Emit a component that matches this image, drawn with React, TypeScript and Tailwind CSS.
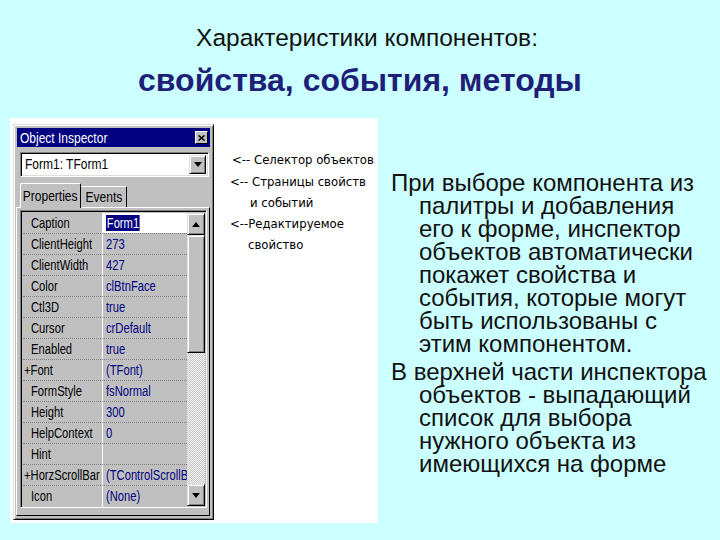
import React from "react";

const rows: { n: string; v: string; plus?: boolean; sel?: boolean }[] = [
  { n: "Caption", v: "Form1", sel: true },
  { n: "ClientHeight", v: "273" },
  { n: "ClientWidth", v: "427" },
  { n: "Color", v: "clBtnFace" },
  { n: "Ctl3D", v: "true" },
  { n: "Cursor", v: "crDefault" },
  { n: "Enabled", v: "true" },
  { n: "Font", v: "(TFont)", plus: true },
  { n: "FormStyle", v: "fsNormal" },
  { n: "Height", v: "300" },
  { n: "HelpContext", v: "0" },
  { n: "Hint", v: "" },
  { n: "HorzScrollBar", v: "(TControlScrollBar)", plus: true },
  { n: "Icon", v: "(None)" },
];

const p1 = [
  "При выборе компонента из",
  "палитры и добавления",
  "его к форме, инспектор",
  "объектов автоматически",
  "покажет свойства и",
  "события, которые могут",
  "быть использованы с",
  "этим компонентом.",
];
const p2 = [
  "В верхней части инспектора",
  "объектов -  выпадающий",
  "список для выбора",
  "нужного объекта из",
  "имеющихся на форме",
];

function N({ children }: { children: React.ReactNode }) {
  return <span className="inline-block origin-left scale-x-[0.8] whitespace-nowrap">{children}</span>;
}
function NC({ children }: { children: React.ReactNode }) {
  return <span className="inline-block origin-center scale-x-[0.8] whitespace-nowrap">{children}</span>;
}

function Tri({ up }: { up?: boolean }) {
  return (
    <svg width="8" height="5" viewBox="0 0 8 5">
      {up ? <path d="M0 5 L4 0 L8 5 Z" fill="#000" /> : <path d="M0 0 L8 0 L4 5 Z" fill="#000" />}
    </svg>
  );
}

export default function App() {
  return (
    <div className="w-[720px] h-[540px] overflow-hidden bg-[#ccffff] font-['Liberation_Sans',Arial,sans-serif]">
      <div className="pt-[26px] pl-[14px] text-center text-[24.5px] leading-[24px] text-[#111111]">Характеристики компонентов:</div>
      <div className="mt-[12px] text-center text-[32px] leading-[36px] font-bold text-[#1f1f7a]">свойства, события, методы</div>

      <div className="mt-[20px] flex items-start">
        {/* screenshot block */}
        <div className="ml-[10px] w-[368px] h-[405px] bg-white flex items-start pt-[6px] pl-[3px]">
          {/* Object inspector window */}
          <div className="w-[201px] h-[396px] bg-[#c0c0c0] border-[1px] border-t-[#dfdfdf] border-l-[#dfdfdf] border-r-[#000000] border-b-[#000000] shadow-[inset_1px_1px_0_#ffffff,inset_-1px_-1px_0_#808080] p-[3px] flex flex-col text-[14px]">
            {/* title bar */}
            <div className="h-[19px] bg-[#000080] flex items-center justify-between pl-[3px] pr-[2px] overflow-hidden">
              <span className="text-white leading-[19px] text-[15px]"><N>Object Inspector</N></span>
              <div className="w-[13px] h-[13px] shrink-0 bg-[#c0c0c0] border-[1px] border-t-white border-l-white border-r-[#000000] border-b-[#000000] flex items-center justify-center">
                <svg width="7" height="6" viewBox="0 0 7 6">
                  <path d="M0.5 0.5 L6.5 5.5 M6.5 0.5 L0.5 5.5" stroke="#000" strokeWidth="1.6" />
                </svg>
              </div>
            </div>
            {/* combo */}
            <div className="mt-[5px] ml-[3px] w-[189px] h-[25px] bg-white border-[1px] border-t-[#808080] border-l-[#808080] border-r-white border-b-white shadow-[inset_1px_1px_0_#000000,inset_-1px_-1px_0_#dfdfdf] flex items-stretch p-[2px]">
              <div className="flex-1 pl-[2px] flex items-center text-black overflow-hidden text-[15px]"><N>Form1: TForm1</N></div>
              <div className="w-[17px] shrink-0 bg-[#c0c0c0] border-[1px] border-t-[#dfdfdf] border-l-[#dfdfdf] border-r-[#000000] border-b-[#000000] shadow-[inset_1px_1px_0_#ffffff,inset_-1px_-1px_0_#808080] flex items-center justify-center">
                <Tri />
              </div>
            </div>
            {/* tabs */}
            <div className="mt-[6px] ml-[3px] flex items-end h-[24px] relative z-10">
              <div className="w-[61px] h-[25px] mb-[-1px] bg-[#c0c0c0] border-t-[1px] border-l-[1px] border-r-[1px] border-t-white border-l-white border-r-[#000000] rounded-t-[2px] flex items-center justify-center text-black text-[15px]"><NC>Properties</NC></div>
              <div className="w-[46px] h-[21px] bg-[#c0c0c0] border-t-[1px] border-r-[1px] border-t-white border-r-[#000000] rounded-tr-[2px] flex items-center justify-center text-black text-[15px]"><NC>Events</NC></div>
            </div>
            {/* tab page */}
            <div className="flex-1 -ml-[1px] w-[194px] border-[1px] border-t-white border-l-white border-r-[#000000] border-b-[#000000] pt-[2px] pl-[3px]">
              {/* grid */}
              <div className="w-[187px] h-[298px] border-[1px] border-t-[#808080] border-l-[#808080] border-r-white border-b-white shadow-[inset_1px_1px_0_#000000] p-[1px] pl-[2px] pt-[2px] flex">
                <div className="w-[164px] flex flex-col">
                  {rows.map((r, i) => (
                    <div
                      key={i}
                      className={i < 13 ? "flex h-[21px] shrink-0 border-b-[1px] border-dotted border-[#808080]" : "flex h-[21px] shrink-0"}
                    >
                      <div className={r.plus ? "w-[80px] shrink-0 pl-[1px] border-r-[1px] border-white flex items-center text-black overflow-hidden" : "w-[80px] shrink-0 pl-[8px] border-r-[1px] border-white flex items-center text-black overflow-hidden"}>
                        <N>
                          {r.plus ? "+" : ""}
                          {r.n}
                        </N>
                      </div>
                      <div className={r.sel ? "flex-1 bg-white pl-[3px] flex items-center overflow-hidden" : "flex-1 pl-[3px] flex items-center text-[#000080] overflow-hidden"}>
                        {r.sel ? (
                          <N>
                            <span className="bg-[#000080] text-white px-[1px] leading-[16px] inline-block">{r.v}</span>
                          </N>
                        ) : (
                          <N>{r.v}</N>
                        )}
                      </div>
                    </div>
                  ))}
                </div>
                {/* scrollbar */}
                <div className="w-[18px] flex flex-col bg-[repeating-conic-gradient(#c0c0c0_0%_25%,#ffffff_0%_50%)] bg-[length:2px_2px]">
                  <div className="h-[22px] bg-[#c0c0c0] border-[1px] border-t-[#dfdfdf] border-l-[#dfdfdf] border-r-[#000000] border-b-[#000000] shadow-[inset_1px_1px_0_#ffffff,inset_-1px_-1px_0_#808080] flex items-center justify-center">
                    <Tri up />
                  </div>
                  <div className="h-[118px] bg-[#c0c0c0] border-[1px] border-t-[#dfdfdf] border-l-[#dfdfdf] border-r-[#000000] border-b-[#000000] shadow-[inset_1px_1px_0_#ffffff,inset_-1px_-1px_0_#808080]" />
                  <div className="flex-1" />
                  <div className="h-[22px] bg-[#c0c0c0] border-[1px] border-t-[#dfdfdf] border-l-[#dfdfdf] border-r-[#000000] border-b-[#000000] shadow-[inset_1px_1px_0_#ffffff,inset_-1px_-1px_0_#808080] flex items-center justify-center">
                    <Tri />
                  </div>
                </div>
              </div>
            </div>
          </div>

          {/* annotations */}
          <div className="ml-[16px] mt-[25px] flex flex-col text-[13px] leading-[21px] text-black font-['DejaVu_Sans_Condensed','DejaVu_Sans',sans-serif] whitespace-nowrap">
            <div className="h-[22px] pl-[2px]">&lt;-- Селектор объектов</div>
            <div className="h-[21px]">&lt;-- Страницы свойств</div>
            <div className="h-[21px] pl-[20px]">и событий</div>
            <div className="h-[21px]">&lt;--Редактируемое</div>
            <div className="h-[21px] pl-[18px]">свойство</div>
          </div>
        </div>

        {/* description text */}
        <div className="ml-[13px] mt-[53px] text-[24px] leading-[23px] text-[#111111] whitespace-nowrap">
          {p1.map((l, i) => (
            <div key={i} className={i === 0 ? "" : "pl-[28px]"}>{l}</div>
          ))}
          <div className="h-[5px]" />
          {p2.map((l, i) => (
            <div key={i} className={i === 0 ? "" : "pl-[28px]"}>{l}</div>
          ))}
        </div>
      </div>
    </div>
  );
}
